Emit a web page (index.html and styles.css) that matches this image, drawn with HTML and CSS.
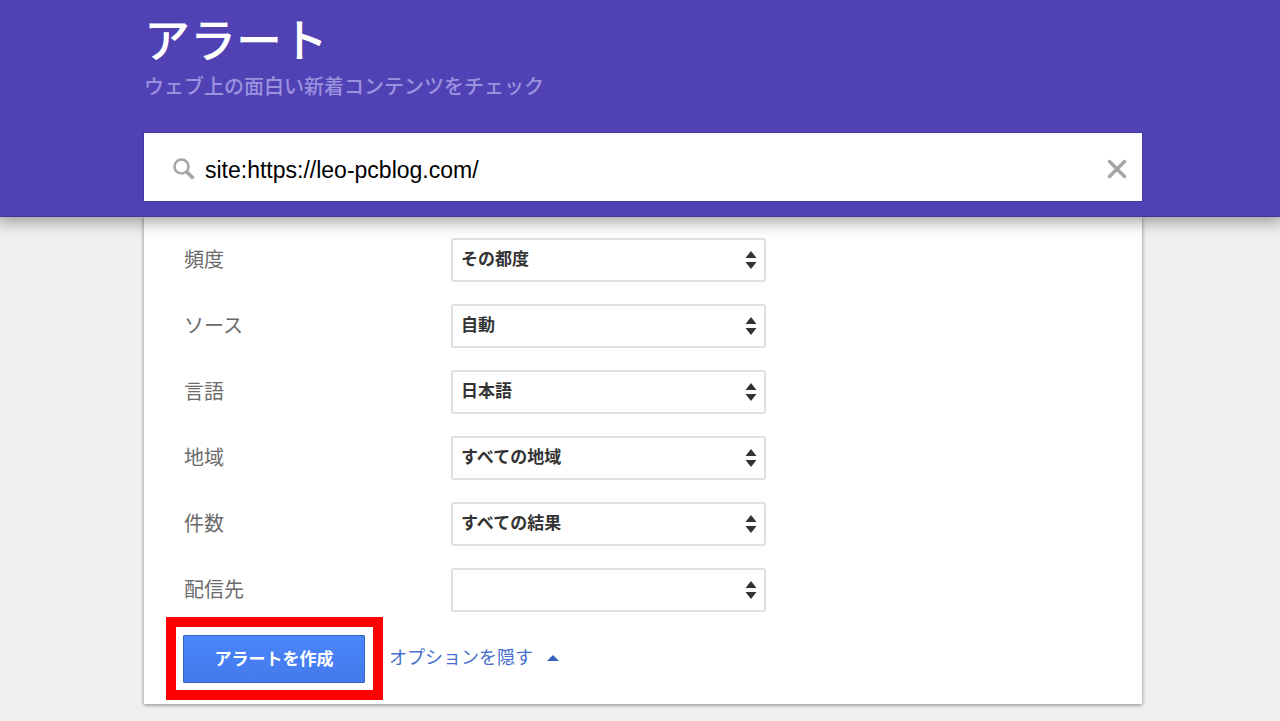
FILE: index.html
```
<!DOCTYPE html>
<html lang="ja">
<head>
<meta charset="utf-8">
<meta name="viewport" content="width=device-width, initial-scale=1">
<title>アラート</title>
<link rel="stylesheet" href="styles.css">
</head>
<body>
<header class="header">
  <h1 class="title">アラート</h1>
  <p class="subtitle">ウェブ上の面白い新着コンテンツをチェック</p>
  <div class="search">
    <svg class="search-icon" viewBox="0 0 22 22" aria-hidden="true"><circle cx="8.5" cy="8.5" r="7" fill="none" stroke="#a6a6a6" stroke-width="2.6"/><path d="M13.5 13.5 20.5 20.5" stroke="#a6a6a6" stroke-width="3.8"/></svg>
    <input class="search-input" type="text" aria-label="アラートを作成" value="site:https://leo-pcblog.com/">
    <button class="clear" type="button" aria-label="クリア"><svg class="clear-icon" viewBox="0 0 20 20" aria-hidden="true"><path d="M2.5 2.5 17.5 17.5M17.5 2.5 2.5 17.5" stroke="#a4a4a4" stroke-width="3.4" stroke-linecap="round"/></svg></button>
  </div>
</header>
<main class="content">
  <form class="card">
    <div class="row">
      <label class="label" for="frequency">頻度</label>
      <div class="select-box"><select class="select" id="frequency"><option>その都度</option></select><svg class="arrows" viewBox="0 0 12 18" aria-hidden="true"><path d="M6 0 11.5 7H.5ZM.5 11h11L6 18Z"/></svg></div>
    </div>
    <div class="row">
      <label class="label" for="source">ソース</label>
      <div class="select-box"><select class="select" id="source"><option>自動</option></select><svg class="arrows" viewBox="0 0 12 18" aria-hidden="true"><path d="M6 0 11.5 7H.5ZM.5 11h11L6 18Z"/></svg></div>
    </div>
    <div class="row">
      <label class="label" for="language">言語</label>
      <div class="select-box"><select class="select" id="language"><option>日本語</option></select><svg class="arrows" viewBox="0 0 12 18" aria-hidden="true"><path d="M6 0 11.5 7H.5ZM.5 11h11L6 18Z"/></svg></div>
    </div>
    <div class="row">
      <label class="label" for="region">地域</label>
      <div class="select-box"><select class="select" id="region"><option>すべての地域</option></select><svg class="arrows" viewBox="0 0 12 18" aria-hidden="true"><path d="M6 0 11.5 7H.5ZM.5 11h11L6 18Z"/></svg></div>
    </div>
    <div class="row">
      <label class="label" for="volume">件数</label>
      <div class="select-box"><select class="select" id="volume"><option>すべての結果</option></select><svg class="arrows" viewBox="0 0 12 18" aria-hidden="true"><path d="M6 0 11.5 7H.5ZM.5 11h11L6 18Z"/></svg></div>
    </div>
    <div class="row">
      <label class="label" for="delivery">配信先</label>
      <div class="select-box"><select class="select" id="delivery"><option></option></select><svg class="arrows" viewBox="0 0 12 18" aria-hidden="true"><path d="M6 0 11.5 7H.5ZM.5 11h11L6 18Z"/></svg></div>
    </div>
    <div class="actions">
      <div class="highlight"><button class="create" type="button">アラートを作成</button></div>
      <a class="toggle" href="#">オプションを隠す<svg class="toggle-icon" viewBox="0 0 12 6" aria-hidden="true"><path d="M6 0 12 6H0Z" fill="#3560c0"/></svg></a>
    </div>
  </form>
</main>
</body>
</html>
```
FILE: styles.css
```
* {
  box-sizing: border-box;
}

body {
  margin: 0;
  background: #f0f0f0;
  color: #6a6a6a;
  font-family: "Liberation Sans", "Noto Sans CJK JP", sans-serif;
}

.header {
  position: relative;
  padding: 5px 138px 15px 144px;
  background: #5042b5;
  border-bottom: 1px solid #43359c;
  box-shadow: 0 0 16px 4px rgba(0, 0, 0, 0.4);
}

.title {
  margin: 0 0 3px;
  color: #fff;
  font-family: "Noto Sans CJK JP", sans-serif;
  font-size: 46px;
  font-weight: 500;
  line-height: 64px;
}

.subtitle {
  margin: 0 0 33px;
  color: #9c91de;
  font-family: "Noto Sans CJK JP", sans-serif;
  font-size: 20px;
  font-weight: 500;
  line-height: 28px;
}

.search {
  display: flex;
  align-items: center;
  height: 68px;
  padding: 0 15px 0 29px;
  background: #fff;
  box-shadow: 0 0 0 1px #44369f;
}

.search-icon {
  flex: none;
  width: 22px;
  height: 22px;
  margin-top: 4px;
}

.search-input {
  flex: 1;
  min-width: 0;
  height: 40px;
  margin-top: 6px;
  padding: 0 10px;
  border: 0;
  outline: 0;
  background: transparent;
  color: #000;
  font: 23px "Liberation Sans", sans-serif;
}

.clear {
  display: flex;
  margin-top: 4px;
  padding: 0;
  border: 0;
  background: none;
}

.clear-icon {
  width: 20px;
  height: 20px;
}

.content {
  padding: 0 138px 16px 144px;
}

.card {
  display: flex;
  flex-direction: column;
  gap: 22px;
  padding: 21px 22px 4px;
  background: #fff;
  box-shadow: 0 1px 4px rgba(0, 0, 0, 0.45);
}

.row {
  display: grid;
  grid-template-columns: 267px minmax(0, 315px);
  align-items: center;
  padding-left: 18px;
}

.label {
  font-size: 20px;
  line-height: 28px;
}

.select-box {
  display: grid;
  align-items: center;
}

.select {
  grid-area: 1 / 1;
  width: 100%;
  height: 44px;
  padding: 0 32px 2px 8px;
  border: 2px solid #e0e0e0;
  border-radius: 3px;
  appearance: none;
  background: #fff;
  color: #333;
  font: 700 17px "Liberation Sans", "Noto Sans CJK JP", sans-serif;
}

.arrows {
  grid-area: 1 / 1;
  justify-self: end;
  width: 12px;
  height: 18px;
  margin-right: 9px;
  fill: #333;
  pointer-events: none;
}

.actions {
  display: flex;
  align-items: center;
  gap: 6px;
  margin-top: -17px;
}

.highlight {
  padding: 8px 8px 7px 7px;
  border: 10px solid #f00;
}

.create {
  display: block;
  width: 182px;
  height: 48px;
  padding: 0 0 4px;
  border: 1px solid #3465c4;
  border-radius: 1px;
  background: linear-gradient(#4b86fd, #4479ea);
  color: #fff;
  font: 700 17px "Liberation Sans", "Noto Sans CJK JP", sans-serif;
}

.toggle {
  display: flex;
  align-items: center;
  gap: 14px;
  padding-bottom: 2px;
  color: #4770ce;
  font-size: 18px;
  line-height: 28px;
  text-decoration: none;
}

.toggle-icon {
  width: 12px;
  height: 6px;
}
```
